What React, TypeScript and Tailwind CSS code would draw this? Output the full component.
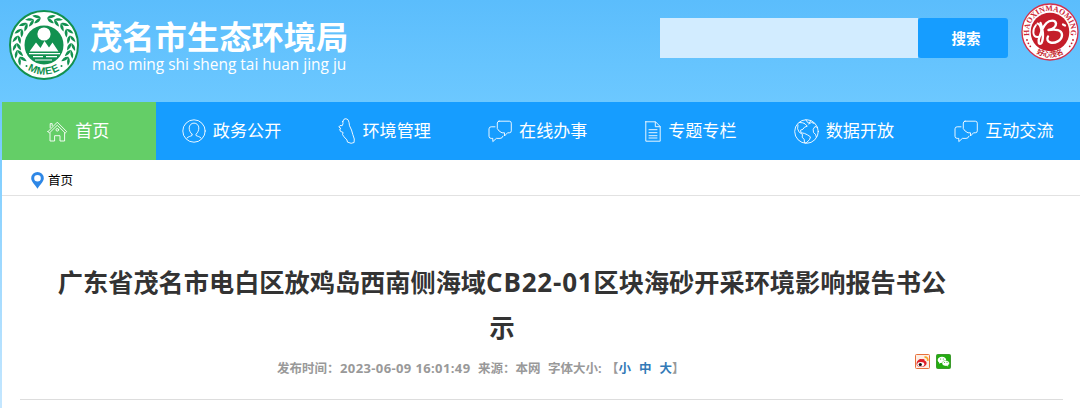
import type { ReactNode } from 'react';

const svgProps = {
  fill: 'none',
  stroke: 'currentColor',
  strokeWidth: 0.9,
  strokeLinejoin: 'round' as const,
  strokeLinecap: 'round' as const,
};

function HomeIcon() {
  return (
    <svg width="21" height="21" viewBox="0 0 21 21" {...svgProps}>
      <path d="M1 10.6 10.3 1.2l9.4 9.4-1.5 1.4-7.9-7.8L2.4 12 1 10.6Z" />
      <path d="M3.2 6.8V2.6h2v2.2M3 12v8h4.6v-5.3h5.4V20h4.6v-8" />
      <circle cx="10.3" cy="8.8" r="1.3" />
    </svg>
  );
}

function PersonIcon() {
  return (
    <svg width="24" height="24" viewBox="0 0 24 24" {...svgProps}>
      <circle cx="12" cy="12" r="11.2" />
      <path d="M10 15.200C8 13.600 7.200 11 7.200 8.900a4.800 4.800 0 0 1 9.600 0c0 2.100-.8 4.700-2.800 6.300v1.300c1.500.8 3.600 1 5 2.500M10 15.200v1.300c-1.500.8-3.600 1-5 2.500" />
    </svg>
  );
}

function RegionIcon() {
  return (
    <svg width="17" height="26" viewBox="0 0 17 26" {...svgProps}>
      <path d="M4.800 3.500 6 1.200l2-.5 2 1 1 2.600.5 3.400 2 4.300 1.300 4.500 1.500 4.500-.2 3.500-3 .8-3.600-1.200-.6-2.200L6 18.800l-1.500-2.300.6-2-2.800-1.300-.5-2.200 1.100-.6L.8 9l1.200-1.500 2.200.2.800-2-.2-2.200Z" />
    </svg>
  );
}

function ChatIcon() {
  return (
    <svg width="24" height="23" viewBox="0 0 24 23" {...svgProps}>
      <path d="M11 1.200h10.300a2 2 0 0 1 2 2v7.600a2 2 0 0 1-2 2h-1.800L16.500 16v-3.200H14l-2.800-1.700-1.900-2.500V3a2 2 0 0 1 1.700-1.800Z" />
      <path d="M7 6.800H3.200a2.200 2.200 0 0 0-2.200 2v7.500a2.200 2.200 0 0 0 2.200 2.100h1.600v3.200l3.600-3.200H12a3 3 0 0 0 3-2.200" />
    </svg>
  );
}

function DocIcon() {
  return (
    <svg width="16" height="21" viewBox="0 0 16 21" {...svgProps}>
      <path d="M.8.800h9.700l4.700 4.700v14.700H.8V.8Z" />
      <path d="M10.300 1v4.700H15M4 8.700h8M4 11.700h8M4 14.700h8M4 17h8" />
    </svg>
  );
}

function GlobeIcon() {
  return (
    <svg width="25" height="25" viewBox="0 0 25 25" {...svgProps}>
      <circle cx="12.500" cy="12.500" r="11.800" />
      <path d="m5.500 3.500 3.200.3 2.300 1 2.300 2.400-2.800 1-1.500 2-2.500 1 .5 2.600 3.500.6 3 1.500 3 2-1 2.800-3.500 3.300-1.500-.2-.3-3.300-2-2.300.3-2.700-3.300-2.300-1.600-3.400L4 6M12 .8l1 2 2 1.400 1.500-2M14.800 5l2.700-1.600 2.500 1M23.500 8.500l-2.500-1-1.800 2.700.3 3.400 2 1.700.8 2.500" />
    </svg>
  );
}

// One side of the wreath, mirrored for the other half
const leaves = [147, 162, 177, 193, 209, 225, 241, 256];

function BureauLogo() {
  const side = leaves.map((a) => (
    <g key={a} transform={`rotate(${a} 35 35) translate(62.300 35)`}>
      <path d="M0 3.500C-3.600 2-4.300-1-3.900-4.300-1.300-2.300.2 0 0 3.500Z" />
      <path d="M0 3.500C3.400 1.500 4.200-1 4-4.300 1.300-2.300-.3 0 0 3.500Z" />
    </g>
  ));
  return (
    <svg width="70" height="70" viewBox="0 0 70 70">
      <circle cx="35" cy="35" r="34" fill="#fff" stroke="#129150" strokeWidth="2" />
      <circle cx="35" cy="35" r="19.500" fill="#129150" />
      <g fill="#129150">
        {side}
        <g transform="matrix(-1 0 0 1 70 0)">{side}</g>
      </g>
      <circle cx="35" cy="24" r="6.600" fill="#fff" />
      <path d="m20.500 41.500 6.500-9 4.500 5.500 4-7 4.500 6.500 3.500-5 6 9Z" fill="#fff" />
      <path d="M20 43.700h31M24 46.700h10M37 46.700h11M26 50h17" stroke="#fff" strokeWidth="1.200" />
      <defs>
        <path id="logoArc" d="M5.500 40A30 30 0 0 0 64.500 40" />
      </defs>
      <text fill="#129150" fontSize="10.500" fontWeight="700" fontFamily="'Liberation Sans', sans-serif" textAnchor="middle" letterSpacing="0.800">
        <textPath href="#logoArc" startOffset="50%">MMEE</textPath>
      </text>
      <circle cx="17.500" cy="56" r="1" fill="#129150" />
      <circle cx="52.500" cy="56" r="1" fill="#129150" />
    </svg>
  );
}

function CitySeal() {
  return (
    <svg width="58" height="58" viewBox="0 0 58 58">
      <circle cx="29" cy="29" r="28" fill="#fff" stroke="#d5304a" strokeWidth="1.300" />
      <circle cx="29" cy="29" r="19.300" fill="#c41e2a" />
      <defs>
        <path id="sealTop" d="M8.400 33A21 21 0 1 1 49.600 33" />
        <path id="sealBottom" d="M9 44.500A25.500 25.500 0 0 0 49 44.500" />
      </defs>
      <text fill="#cc2637" fontSize="8" fontWeight="700" fontFamily="'Liberation Serif', serif" textAnchor="middle">
        <textPath href="#sealTop" startOffset="50%" textLength="73" lengthAdjust="spacingAndGlyphs">HAOXINMAOMING</textPath>
      </text>
      <text fill="#c41e2a" fontSize="7.200" fontWeight="700" fontFamily="'Noto Sans CJK SC', sans-serif" textAnchor="middle">
        <textPath href="#sealBottom" startOffset="50%">好心茂名</textPath>
      </text>
      <g fill="#c41e2a">
        <circle cx="6" cy="37" r=".9" />
        <circle cx="7.400" cy="40.300" r=".9" />
        <circle cx="9.300" cy="43.300" r=".9" />
        <circle cx="52" cy="37" r=".9" />
        <circle cx="50.600" cy="40.300" r=".9" />
        <circle cx="48.700" cy="43.300" r=".9" />
      </g>
      <g fill="none" stroke="#fff" strokeLinecap="round" strokeLinejoin="round">
        <path d="M15 22c-4 5-3.500 12 1.500 12 4 0 4.500-4 3.500-8-.8-3.800-2-5-3.500-5.500" strokeWidth="1.900" />
        <path d="M19.500 20c2.500 5 3.500 15 1 20-2.500 2.500-4-1-2-6 1.500-5 4-11 7-14 3-3 9-3.500 9.500.5.300 3.500-3.500 5.800-7.500 6.500 7-1 13.500-.5 13.500 5 0 6-7.500 8.500-11.500 7.500-3-.8-4-3.500-2.500-6" strokeWidth="2.400" />
        <path d="M42 21.500 44 22.500" strokeWidth="2.200" />
      </g>
    </svg>
  );
}

function WeiboIcon() {
  return (
    <svg width="15" height="15" viewBox="0 0 15 15">
      <rect x=".5" y=".5" width="14" height="14" rx="1" fill="#fdeee4" stroke="#e8703a" />
      <path d="M1.500 10C1.500 6.500 5 4.300 7 5.200c2-.6 3 .3 2.600 1.600 2 .5 2.400 2 1.700 3.600-1.500 3.300-9.800 3.600-9.800-.4Z" fill="#df2029" />
      <ellipse cx="5.800" cy="10.200" rx="3.500" ry="2.300" fill="#fff" />
      <circle cx="5.300" cy="10.500" r="1.600" fill="#111" />
      <path d="M9.500 3.200c2.300-.4 3.700 1.200 3.200 3.600" fill="none" stroke="#f5a623" strokeWidth="1.700" />
    </svg>
  );
}

function WechatIcon() {
  return (
    <svg width="15" height="15" viewBox="0 0 15 15">
      <rect x=".5" y=".5" width="14" height="14" rx="1" fill="#22ac10" stroke="#3c9a2c" />
      <path d="M6 2.700c-2.500 0-4.300 1.400-4.300 3.200 0 1 .6 1.900 1.500 2.500l-.3 1.400 1.600-.9c.5.1 1 .1 1.500.1 2.500 0 4.200-1.400 4.200-3.100S8.500 2.700 6 2.700Z" fill="#fff" />
      <path d="M9.700 6.500c-2 0-3.700 1.200-3.700 2.800s1.600 2.800 3.700 2.800l1.200-.1 1.400.7-.3-1.200c.9-.5 1.400-1.300 1.400-2.200 0-1.600-1.600-2.800-3.700-2.800Z" fill="#fff" stroke="#22ac10" strokeWidth=".4" />
      <g fill="#22ac10">
        <circle cx="4.600" cy="5" r=".6" />
        <circle cx="7.300" cy="5" r=".6" />
        <circle cx="8.600" cy="8.600" r=".5" />
        <circle cx="11" cy="8.600" r=".5" />
      </g>
    </svg>
  );
}

const navItems: { label: string; icon: ReactNode }[] = [
  { label: '政务公开', icon: <PersonIcon /> },
  { label: '环境管理', icon: <RegionIcon /> },
  { label: '在线办事', icon: <ChatIcon /> },
  { label: '专题专栏', icon: <DocIcon /> },
  { label: '数据开放', icon: <GlobeIcon /> },
];

export default function App() {
  return (
    <div className="w-[1080px] h-[408px] overflow-hidden bg-linear-to-b from-[#5bbdfc] from-0% via-[#6cc8ff] via-25% to-[#c5e7ff] font-['Open_Sans','Noto_Sans_CJK_SC',sans-serif]">
      {/* Header */}
      <header className="flex h-[102px] items-start pl-[9px]">
        <div className="pt-[10px]">
          <BureauLogo />
        </div>
        <div className="ml-[11px] w-[262px] pt-[16px] text-white whitespace-nowrap">
          <h1 className="text-[32.300px] leading-[40px] font-bold">茂名市生态环境局</h1>
          <p className="pl-[2px] text-[15.450px] leading-[17px]">mao ming shi sheng tai huan jing ju</p>
        </div>
        <form className="mt-[18px] ml-[308px] flex h-[40px]">
          <input className="w-[258px] bg-[#d2ecff] outline-none" />
          <button type="button" className="w-[90px] rounded-[3px] bg-[#169dff] pt-[2px] pl-[6px] text-[14.500px] font-bold text-white">
            搜索
          </button>
        </form>
        <div className="ml-[13px] shrink-0 pt-[3px]">
          <CitySeal />
        </div>
      </header>

      <div className="ml-[2px] h-[306px] bg-white">
        {/* Main navigation */}
        <nav className="flex h-[58px] bg-[#169dff] text-[17.100px] text-white">
          <a className="flex w-[153.500px] shrink-0 items-center justify-center gap-[7px] bg-[#64ce67] pr-px">
            <HomeIcon />
            <span>首页</span>
          </a>
          {navItems.map((item) => (
            <a key={item.label} className="flex w-[153.100px] shrink-0 items-center justify-center gap-[7px] pr-px">
              {item.icon}
              <span>{item.label}</span>
            </a>
          ))}
          <a className="flex flex-1 items-center justify-end gap-[7px] pr-[26.500px]">
            <ChatIcon />
            <span>互动交流</span>
          </a>
        </nav>

        {/* Breadcrumb */}
        <div className="flex h-[36px] items-center border-b border-[#e2e2e2] pt-[6px] pl-[29px] text-[12.500px] text-black">
          <svg width="13" height="17" viewBox="0 0 13 17" className="mr-[4px]">
            <path fillRule="evenodd" d="M6.500 0A6.300 6.300 0 0 0 .2 6.300C.2 9.500 3.500 12 6.500 16.800 9.500 12 12.800 9.500 12.800 6.300A6.300 6.300 0 0 0 6.500 0Zm0 2.900a3.300 3.300 0 1 1 0 6.600 3.300 3.300 0 0 1 0-6.600Z" fill="#2e87e6" />
          </svg>
          <span className="pt-[2px]">首页</span>
        </div>

        {/* Article heading */}
        <main className="mr-[17px] ml-[18px] h-[204px] border-b border-[#ddd] pt-[64px]">
          <h2 className="w-[964px] text-center text-[25.200px] leading-[45px] font-bold text-[#333] whitespace-nowrap">
            广东省茂名市电白区放鸡岛西南侧海域<span className="text-[26px] tracking-[0.800px]">CB22-01</span>区块海砂开采环境影响报告书公
            <br />示
          </h2>
          <div className="flex items-start pt-[4px] pl-[257px] text-[12.500px] leading-[30px] font-bold text-[#999]">
            <span className="w-[63px]">发布时间：</span>
            <span className="w-[138px] text-[13px] leading-[28px] tracking-[0.380px]">2023-06-09 16:01:49</span>
            <span className="w-[70px]">来源：本网</span>
            <span className="w-[58px]">字体大小:</span>
            <span className="flex w-[309px] whitespace-nowrap">
              【
              <span className="flex gap-[8px] text-[#337ab7]">
                <a>小</a>
                <a>中</a>
                <a>大</a>
              </span>
              】
            </span>
            <span className="flex gap-[6px]">
              <WeiboIcon />
              <WechatIcon />
            </span>
          </div>
        </main>
      </div>
    </div>
  );
}
